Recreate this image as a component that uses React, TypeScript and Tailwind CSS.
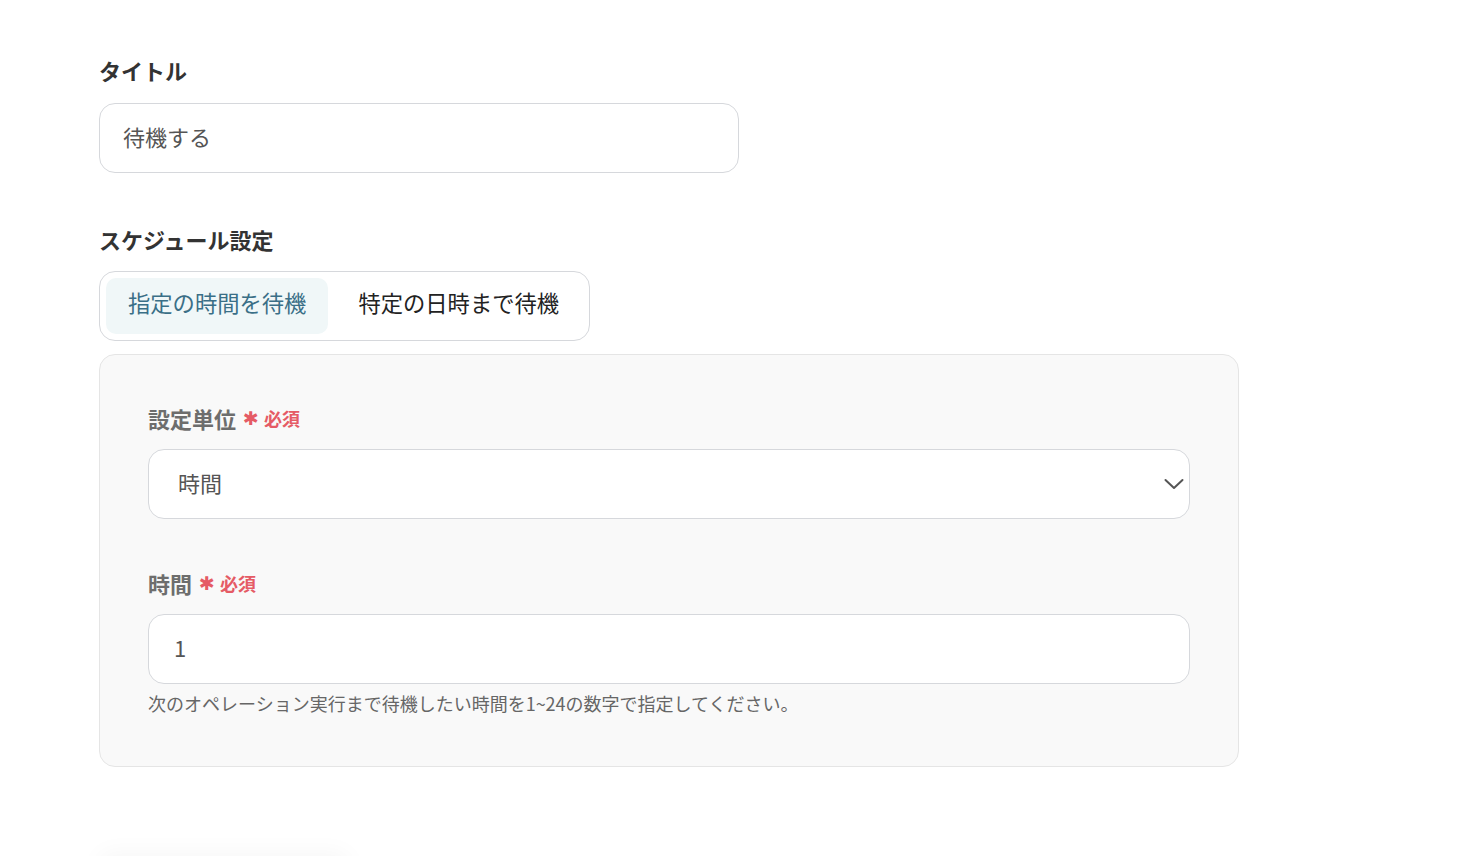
import { useState } from "react";

const font = { fontFamily: '"Noto Sans CJK JP", "Noto Sans", sans-serif' };

function Required() {
  return (
    <span className="ml-[7px] inline-flex items-center text-[18px] font-bold text-[#e55b65]">
      <span className="mr-[5px] text-[19px] leading-none" style={{ fontFamily: '"DejaVu Sans", sans-serif' }}>
        ✱
      </span>
      必須
    </span>
  );
}

export default function App() {
  const [tab, setTab] = useState(0);
  const [title, setTitle] = useState("待機する");
  const [hours, setHours] = useState("1");

  return (
    <div className="min-h-screen bg-white pl-[99px] pt-[55px]" style={font}>
      <div className="flex flex-col">
        <h2 className="text-[22px] font-bold leading-[30px] text-[#333]">タイトル</h2>
        <input
          value={title}
          onChange={(e) => setTitle(e.target.value)}
          className="mt-[18px] h-[70px] w-[640px] rounded-[16px] border border-[#d6d8dc] bg-white px-[23px] pb-[4px] text-[22px] text-[#555] outline-0"
        />

        <h2 className="mt-[51px] text-[22px] font-bold leading-[30px] text-[#333]">
          スケジュール設定
        </h2>
        <div className="mt-[17px] flex w-[491px] gap-[8px] rounded-[16px] border border-[#d6d8dc] bg-white p-[6px]">
          {["指定の時間を待機", "特定の日時まで待機"].map((name, i) => (
            <button
              key={name}
              onClick={() => setTab(i)}
              className={`h-[56px] rounded-[10px] px-[22px] pb-[6px] text-[22.3px] ${
                tab === i ? "bg-[#f0f7f8] text-[#3a6f87]" : "text-[#222]"
              }`}
            >
              {name}
            </button>
          ))}
        </div>

        <div className="mt-[13px] w-[1140px] rounded-[16px] border border-[#e5e5e5] bg-[#f9f9f9] px-[48px] pb-[51px] pt-[48px]">
          <label className="flex items-center text-[22px] font-bold leading-[30px] text-[#6d6d6d]">
            設定単位
            <Required />
          </label>
          <div className="relative mt-[16px]">
            <select className="h-[70px] w-full appearance-none rounded-[16px] border border-[#d6d8dc] bg-white px-[29px] pb-[4px] text-[22px] text-[#555] outline-0">
              <option>時間</option>
              <option>分</option>
              <option>日</option>
            </select>
            <svg
              className="pointer-events-none absolute right-[6px] top-1/2 -translate-y-1/2"
              width="20"
              height="12"
              viewBox="0 0 20 12"
              fill="none"
            >
              <path d="M1.5 2 L10 10 L18.5 2" stroke="#555" strokeWidth="2" strokeLinecap="round" strokeLinejoin="round" />
            </svg>
          </div>

          <label className="mt-[49px] flex items-center text-[22px] font-bold leading-[30px] text-[#6d6d6d]">
            時間
            <Required />
          </label>
          <input
            value={hours}
            onChange={(e) => setHours(e.target.value)}
            className="mt-[16px] h-[70px] w-full rounded-[16px] border border-[#d6d8dc] bg-white px-[25px] pb-[4px] text-[22px] text-[#555] outline-0"
          />
          <p className="mt-[7px] text-[18px] leading-[24px] text-[#666]">
            次のオペレーション実行まで待機したい時間を1~24の数字で指定してください。
          </p>
        </div>

        <div className="mt-[90px] h-[60px] w-[250px] rounded-[12px] bg-white shadow-[0_-4px_24px_rgba(0,0,0,0.04)]" />
      </div>
    </div>
  );
}
